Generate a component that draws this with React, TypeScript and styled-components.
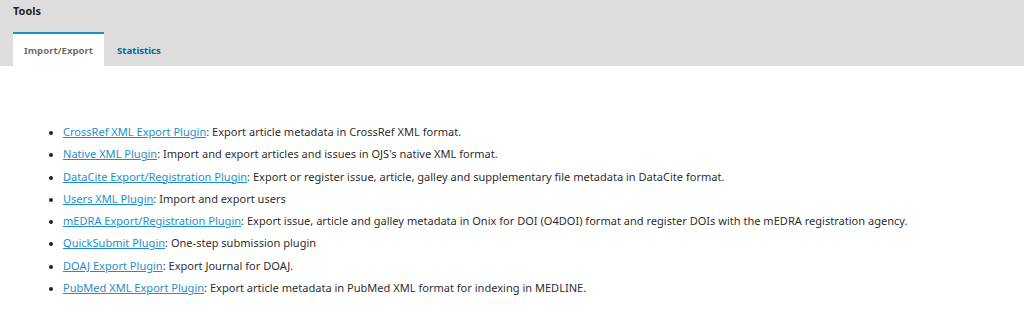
import React from 'react';
import styled, { createGlobalStyle } from 'styled-components';

const plugins = [
  { name: 'CrossRef XML Export Plugin', description: 'Export article metadata in CrossRef XML format.' },
  { name: 'Native XML Plugin', description: "Import and export articles and issues in OJS's native XML format." },
  { name: 'DataCite Export/Registration Plugin', description: 'Export or register issue, article, galley and supplementary file metadata in DataCite format.' },
  { name: 'Users XML Plugin', description: 'Import and export users' },
  { name: 'mEDRA Export/Registration Plugin', description: 'Export issue, article and galley metadata in Onix for DOI (O4DOI) format and register DOIs with the mEDRA registration agency.' },
  { name: 'QuickSubmit Plugin', description: 'One-step submission plugin' },
  { name: 'DOAJ Export Plugin', description: 'Export Journal for DOAJ.' },
  { name: 'PubMed XML Export Plugin', description: 'Export article metadata in PubMed XML format for indexing in MEDLINE.' },
];

const GlobalStyle = createGlobalStyle`
  body {
    margin: 0;
    background: #fff;
    font-family: "Noto Sans", "Liberation Sans", sans-serif;
    color: rgba(0, 0, 0, 0.87);
  }
`;

const Header = styled.div`
  background: #ddd;
  padding: 0 13px;
`;

const Title = styled.h1`
  margin: 0;
  padding-top: 3px;
  font-size: 11px;
  font-weight: 700;
  line-height: 16px;
  color: rgba(0, 0, 0, 0.87);
`;

const Tabs = styled.div`
  display: flex;
  margin-top: 13px;
`;

const Tab = styled.div<{ $active?: boolean }>`
  height: 34px;
  box-sizing: border-box;
  display: flex;
  align-items: center;
  padding: 1px 11px 0 11px;
  font-size: 9.6px;
  font-weight: 700;
  border-top: 2px solid ${(p) => (p.$active ? '#1e8ecb' : 'transparent')};
  background: ${(p) => (p.$active ? '#fff' : 'transparent')};
  color: ${(p) => (p.$active ? 'rgba(0,0,0,0.6)' : '#006798')};
  margin-right: ${(p) => (p.$active ? '2px' : '0')};
`;

const Content = styled.div`
  padding: 55px 0 0 50px;
`;

const PluginList = styled.ul`
  margin: 0;
  padding-left: 13px;
  font-size: 11.05px;
  line-height: 22.3px;
`;

const PluginItem = styled.li`
  &::marker {
    font-size: 10px;
  }
`;

const PluginLink = styled.a`
  color: #1e8ecb;
  text-decoration: underline;
`;

export default function App() {
  return (
    <>
      <GlobalStyle />
      <Header>
        <Title>Tools</Title>
        <Tabs>
          <Tab $active>Import/Export</Tab>
          <Tab>Statistics</Tab>
        </Tabs>
      </Header>
      <Content>
        <PluginList>
          {plugins.map((p) => (
            <PluginItem key={p.name}>
              <PluginLink href="#">{p.name}</PluginLink>: {p.description}
            </PluginItem>
          ))}
        </PluginList>
      </Content>
    </>
  );
}
